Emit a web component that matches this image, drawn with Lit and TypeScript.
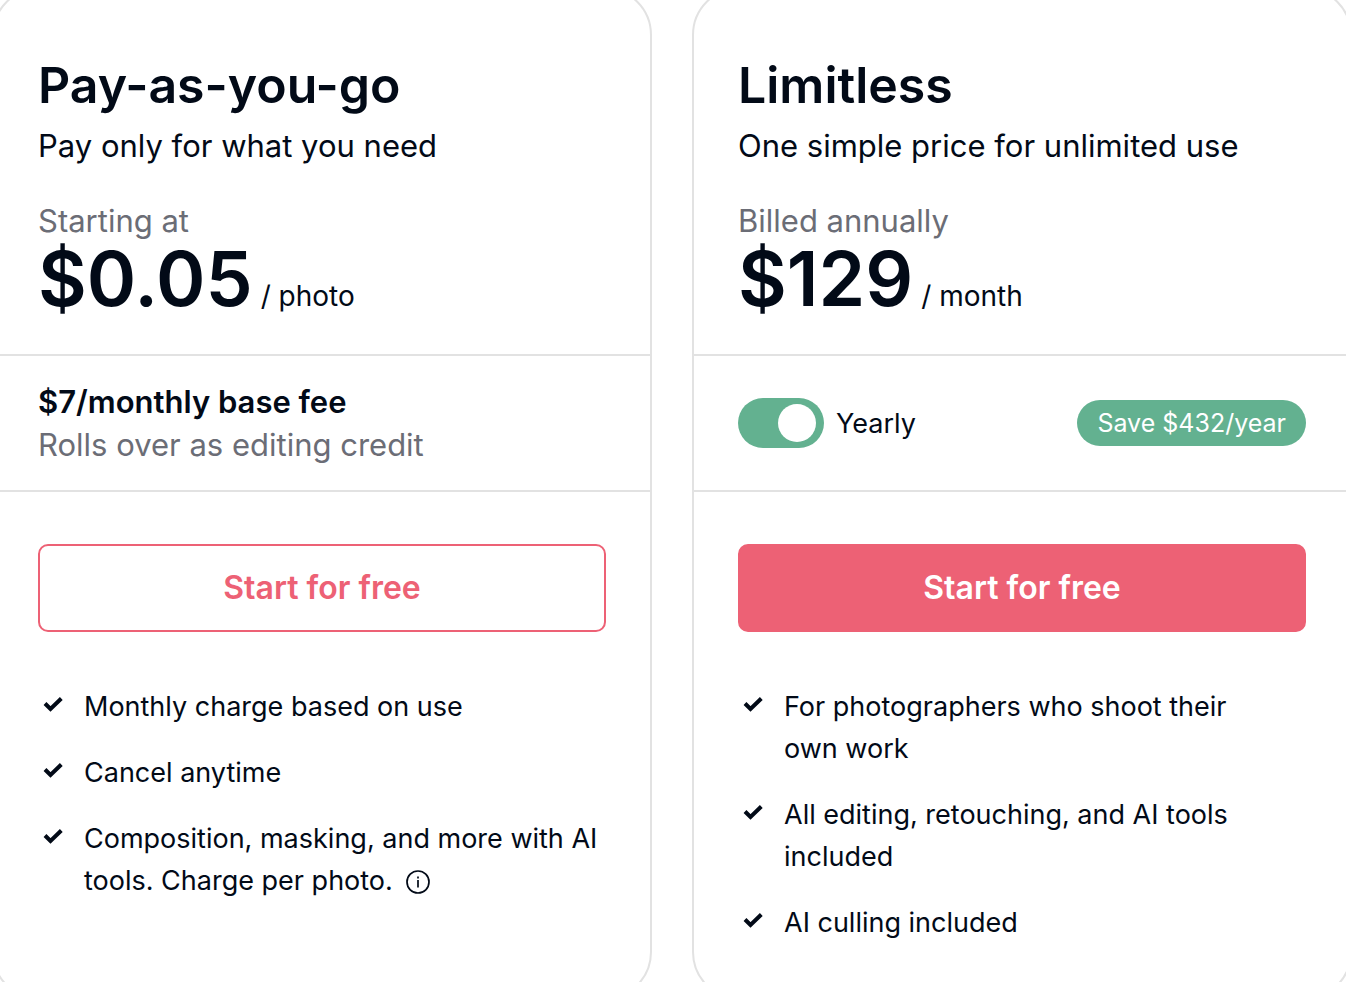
import { LitElement, html, css, nothing } from "lit";
import { customElement, property, state } from "lit/decorators.js";

const INK = css`#020a17`;

interface Feature {
  text: string;
  info?: boolean;
}

@customElement("feature-list")
class FeatureList extends LitElement {
  @property({ attribute: false }) items: Feature[] = [];

  static styles = css`
    :host {
      display: block;
    }
    .list {
      list-style: none;
      margin: 0;
      padding: 0;
      display: flex;
      flex-direction: column;
      gap: 24px;
    }
    .item {
      display: flex;
      gap: 16px;
      font-size: 27px;
      line-height: 42px;
    }
    .check {
      flex: none;
      width: 30px;
      height: 38px;
    }
    .info {
      display: inline-flex;
      padding: 0;
      margin-left: 6px;
      border: 0;
      background: none;
      color: inherit;
      vertical-align: -4px;
      cursor: pointer;
    }
  `;

  render() {
    return html`<ul class="list">
      ${this.items.map(
        (item) => html`<li class="item">
          <svg class="check" viewBox="0 0 30 38" aria-hidden="true">
            <path d="M7 17.5 12.5 23 23.3 12.5" fill="none" stroke="currentColor" stroke-width="4" />
          </svg>
          <span>${item.text}${item.info
            ? html` <button class="info" aria-label="More information">
                <svg width="24" height="24" viewBox="0 0 24 24" fill="none" aria-hidden="true">
                  <circle cx="12" cy="12" r="11" stroke="currentColor" stroke-width="1.7" />
                  <path d="M12 10v7.5M12 6.5v2" stroke="currentColor" stroke-width="1.7" />
                </svg>
              </button>`
            : nothing}</span>
        </li>`
      )}
    </ul>`;
  }
}

@customElement("app-root")
class AppRoot extends LitElement {
  @state() private yearly = true;

  static styles = css`
    :host {
      display: block;
      min-height: 100vh;
      max-height: 100vh;
      overflow: hidden;
      background: #fff;
      color: ${INK};
      font-family: Inter, "Liberation Sans", sans-serif;
    }
    .plans {
      display: grid;
      grid-template-columns: 1fr 1fr;
      gap: 40px;
      margin: -13px -6px 0 -8px;
    }
    .card {
      box-sizing: border-box;
      border: 2px solid #e2e2e2;
      border-radius: 48px;
      padding-bottom: 54px;
    }
    .head {
      padding: 64px 44px 37px;
    }
    .title {
      margin: 0 0 5px;
      font-size: 50px;
      line-height: 64px;
      font-weight: 600;
    }
    .sub,
    .note,
    .fee {
      margin: 0;
      font-size: 31px;
    }
    .sub {
      line-height: 48px;
      margin-bottom: 31px;
    }
    .note {
      line-height: 40px;
    }
    .note,
    .muted {
      color: #6b6d76;
    }
    .price {
      display: flex;
      align-items: baseline;
      gap: 8px;
      margin: 0;
      font-size: 28px;
      line-height: 40px;
    }
    .amount {
      font-size: 75px;
      line-height: 76px;
      font-weight: 600;
    }
    .band {
      display: flex;
      align-items: center;
      justify-content: space-between;
      box-sizing: border-box;
      min-height: 138px;
      padding: 22px 44px;
      border: solid #e2e2e2;
      border-width: 2px 0;
    }
    .fee {
      line-height: 43px;
    }
    .fee strong {
      display: block;
      font-weight: 600;
    }
    .switch {
      display: flex;
      align-items: center;
      gap: 12px;
      font-size: 27px;
      cursor: pointer;
    }
    .toggle {
      appearance: none;
      display: flex;
      align-items: center;
      box-sizing: border-box;
      width: 86px;
      height: 50px;
      margin: 0;
      padding: 0 8px;
      border-radius: 25px;
      background: #b5b7bd;
      cursor: pointer;
    }
    .toggle::before {
      content: "";
      width: 38px;
      height: 38px;
      border-radius: 50%;
      background: #fff;
    }
    .toggle:checked {
      justify-content: flex-end;
      background: #63b190;
    }
    .badge {
      padding: 0 20px;
      border-radius: 23px;
      background: #63b190;
      color: #fff;
      font-size: 25px;
      line-height: 46px;
    }
    .body {
      padding: 52px 44px 0;
    }
    .cta {
      box-sizing: border-box;
      width: 100%;
      height: 88px;
      margin-bottom: 54px;
      padding: 0 0 2px;
      border: 2px solid #ed6175;
      border-radius: 10px;
      background: #fff;
      color: #ed6175;
      font: 600 32px Inter, "Liberation Sans", sans-serif;
      cursor: pointer;
    }
    .solid {
      background: #ed6175;
      color: #fff;
    }
  `;

  render() {
    return html`<main class="plans">
      <section class="card">
        <div class="head">
          <h2 class="title">Pay-as-you-go</h2>
          <p class="sub">Pay only for what you need</p>
          <p class="note">Starting at</p>
          <p class="price"><span class="amount">$0.05</span> <span>/ photo</span></p>
        </div>
        <div class="band">
          <p class="fee">
            <strong>$7/monthly base fee</strong>
            <span class="muted">Rolls over as editing credit</span>
          </p>
        </div>
        <div class="body">
          <button class="cta">Start for free</button>
          <feature-list
            .items=${[
              { text: "Monthly charge based on use" },
              { text: "Cancel anytime" },
              { text: "Composition, masking, and more with AI tools. Charge per photo.", info: true },
            ]}
          ></feature-list>
        </div>
      </section>
      <section class="card">
        <div class="head">
          <h2 class="title">Limitless</h2>
          <p class="sub">One simple price for unlimited use</p>
          <p class="note">Billed annually</p>
          <p class="price"><span class="amount">$129</span> <span>/ month</span></p>
        </div>
        <div class="band">
          <label class="switch" for="yearly">
            <input
              class="toggle"
              id="yearly"
              type="checkbox"
              role="switch"
              .checked=${this.yearly}
              @change=${(e: Event) => (this.yearly = (e.target as HTMLInputElement).checked)}
            />
            Yearly
          </label>
          <span class="badge">Save $432/year</span>
        </div>
        <div class="body">
          <button class="cta solid">Start for free</button>
          <feature-list
            .items=${[
              { text: "For photographers who shoot their own\u00a0work" },
              { text: "All editing, retouching, and AI tools included" },
              { text: "AI culling included" },
            ]}
          ></feature-list>
        </div>
      </section>
    </main>`;
  }
}
